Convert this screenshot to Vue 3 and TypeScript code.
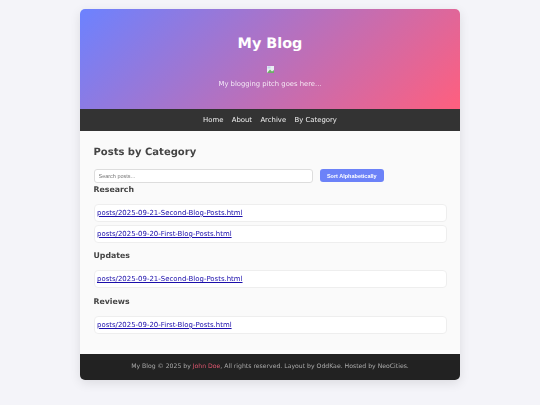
<script setup lang="ts">
const navItems: string[] = ['Home', 'About', 'Archive', 'By Category']
const groups = [
  { name: 'Research', posts: ['posts/2025-09-21-Second-Blog-Posts.html', 'posts/2025-09-20-First-Blog-Posts.html'] },
  { name: 'Updates', posts: ['posts/2025-09-21-Second-Blog-Posts.html'] },
  { name: 'Reviews', posts: ['posts/2025-09-20-First-Blog-Posts.html'] },
]
</script>

<template>
  <div class="page">
    <div class="card">
      <header class="hero">
        <h1>My Blog</h1>
        <svg class="broken" width="7" height="7" viewBox="0 0 7 7" aria-hidden="true">
          <rect width="7" height="7" fill="#e8eef2" />
          <path d="M0 7 L3 3.5 L5 5.5 L7 4 V7 Z" fill="#6fae6a" />
          <rect x="0.5" y="0.5" width="3" height="2" fill="#c4d4ef" />
        </svg>
        <p>My blogging pitch goes here...</p>
      </header>
      <nav class="nav">
        <a v-for="item in navItems" :key="item">{{ item }}</a>
      </nav>
      <main class="main">
        <h2>Posts by Category</h2>
        <div class="tools">
          <input class="search" type="text" placeholder="Search posts..." />
          <button class="sort" type="button">Sort Alphabetically</button>
        </div>
        <section v-for="g in groups" :key="g.name" class="group">
          <h3>{{ g.name }}</h3>
          <ul>
            <li v-for="(p, i) in g.posts" :key="i"><a href="#">{{ p }}</a></li>
          </ul>
        </section>
      </main>
      <footer class="foot">
        My Blog © 2025 by <span class="author">John Doe</span>, All rights reserved. Layout by OddKae. Hosted by NeoCities.
      </footer>
    </div>
  </div>
</template>

<style>
html, body { margin: 0; background: #f4f4f9; }
</style>

<style scoped>
.page {
  height: 405px;
  box-sizing: border-box;
  padding-top: 8.5px;
  font-family: "DejaVu Sans", sans-serif;
  text-rendering: geometricPrecision;
  color: #333;
  overflow: hidden;
}
.card {
  width: 380px;
  margin: 0 auto;
  border-radius: 5px;
  overflow: hidden;
  background: #fafafa;
  box-shadow: 0 3px 11px rgba(0, 0, 0, 0.1);
  filter: blur(0.35px);
}
.hero {
  height: 100px;
  box-sizing: border-box;
  padding-top: 26px;
  display: flex;
  flex-direction: column;
  align-items: center;
  background: linear-gradient(135deg, #6c82ff, #ff5f7e);
  color: #fff;
}
.hero h1 {
  margin: 0;
  font-size: 14.4px;
  line-height: 19px;
  font-weight: 700;
}
.broken { margin-top: 12px; }
.hero p {
  margin: 6px 0 0;
  font-size: 6.8px;
  line-height: 10px;
  opacity: 0.85;
}
.nav {
  height: 22px;
  display: flex;
  justify-content: center;
  align-items: center;
  gap: 8.3px;
  background: #333;
  color: #f0f0f0;
  font-size: 6.9px;
}
.main {
  height: 223px;
  box-sizing: border-box;
  padding: 14px 13.5px 0;
}
.main h2 {
  margin: 0;
  font-size: 10px;
  line-height: 15px;
  color: #444;
}
.tools {
  display: flex;
  align-items: center;
  gap: 6.5px;
  margin-top: 9px;
}
.search {
  width: 219.5px;
  height: 14.4px;
  box-sizing: border-box;
  padding: 0 4px;
  border: 1px solid #ddd;
  border-radius: 3px;
  background: #fff;
  font-family: "Liberation Sans", sans-serif;
  font-size: 5.5px;
  outline: none;
}
.search::placeholder { color: #777; }
.sort {
  width: 64.5px;
  height: 13.3px;
  padding: 0;
  border: 0;
  border-radius: 3px;
  background: #6c82f8;
  color: #fff;
  font-family: "Liberation Sans", sans-serif;
  font-size: 5.5px;
  font-weight: 700;
}
.group h3 {
  margin: 0;
  font-size: 7.8px;
  line-height: 11px;
  color: #444;
}
.group { margin-top: 7.5px; }
.tools + .group { margin-top: 1px; }
ul {
  list-style: none;
  margin: 9px 0 0;
  padding: 0;
  display: flex;
  flex-direction: column;
  gap: 3px;
}
li {
  height: 18px;
  box-sizing: border-box;
  display: flex;
  align-items: center;
  padding: 0 2.5px;
  background: #fff;
  border: 1px solid #eee;
  border-radius: 4px;
  font-size: 6.95px;
}
li a { color: #1a0dab; text-decoration: underline; }
.foot {
  height: 26px;
  display: flex;
  justify-content: center;
  align-items: center;
  white-space: pre-wrap;
  background: #222;
  color: #aaa;
  font-size: 6.15px;
}
.author { color: #e0566f; }
</style>
